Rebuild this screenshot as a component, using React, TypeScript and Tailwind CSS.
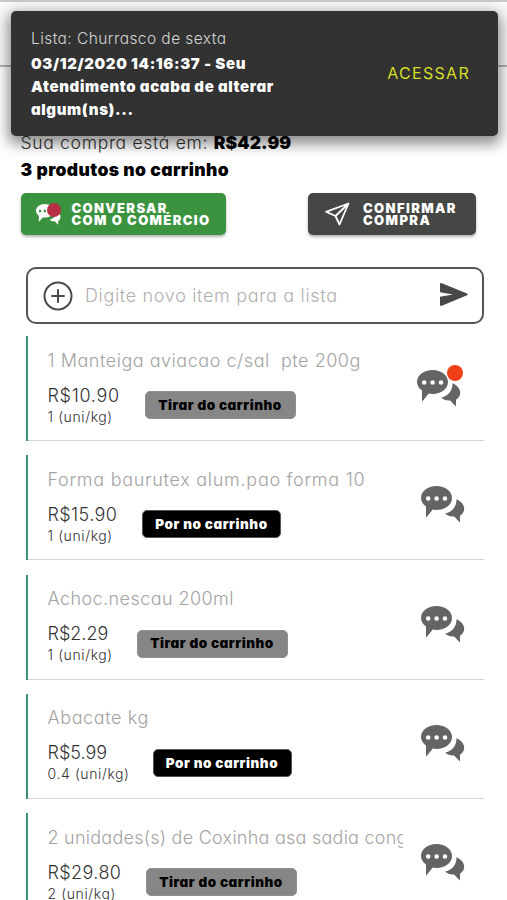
import React from "react";
import clsx from "clsx";

type Product = {
  name: string;
  nameClass: string;
  price: string;
  priceClass: string;
  boxClass: string;
  amount: string;
  inCart: boolean;
  unread?: boolean;
};

const products: Product[] = [
  {
    name: "1 Manteiga aviacao c/sal  pte 200g",
    nameClass: "tracking-[0.53px]",
    price: "R$10.90",
    priceClass: "tracking-[0.7px]",
    boxClass: "w-[97px]",
    amount: "1 (uni/kg)",
    inCart: true,
    unread: true,
  },
  {
    name: "Forma baurutex alum.pao forma 10",
    nameClass: "tracking-[0.72px]",
    price: "R$15.90",
    priceClass: "tracking-[0.4px]",
    boxClass: "w-[94.5px]",
    amount: "1 (uni/kg)",
    inCart: false,
  },
  {
    name: "Achoc.nescau 200ml",
    nameClass: "tracking-[0.43px]",
    price: "R$2.29",
    priceClass: "tracking-normal",
    boxClass: "w-[89px]",
    amount: "1 (uni/kg)",
    inCart: true,
  },
  {
    name: "Abacate kg",
    nameClass: "tracking-[0.6px]",
    price: "R$5.99",
    priceClass: "tracking-normal",
    boxClass: "w-[105px]",
    amount: "0.4 (uni/kg)",
    inCart: false,
  },
  {
    name: "2 unidades(s) de Coxinha asa sadia congelada",
    nameClass: "tracking-[0.25px]",
    price: "R$29.80",
    priceClass: "tracking-[0.4px]",
    boxClass: "w-[98px]",
    amount: "2 (uni/kg)",
    inCart: true,
  },
];

function ChatIcon({ className }: { className?: string }) {
  return (
    <svg viewBox="0 0 44 37" className={className} fill="currentColor">
      <path
        fillRule="evenodd"
        d="M15.500 0C24.200 0 31 5.200 31 12s-6.800 12-15.500 12c-1.500 0-2.600-.1-3.800-.4C9.300 26.500 7.300 29 5 31.700V20.500C2 18.500 0 15.600 0 12 0 5.200 6.800 0 15.500 0ZM7.200 10.200a2.300 2.300 0 1 0 0 4.600 2.300 2.300 0 0 0 0-4.600Zm8.400 0a2.300 2.300 0 1 0 0 4.600 2.300 2.300 0 0 0 0-4.600Zm8.400 0a2.300 2.300 0 1 0 0 4.600 2.300 2.300 0 0 0 0-4.600Z"
      />
      <path d="M35.500 13.200c4.500 2 7.700 5.300 7.700 9.500 0 2.900-1.500 5.300-4.200 7v6.800c-2.200-2.200-4-4.300-5.800-6.100-3.600.4-6.600-.5-9.200-2.800C31 26 35.600 21 35.500 13.200Z" />
    </svg>
  );
}

function Snackbar() {
  return (
    <div className="absolute left-[11px] top-[10.5px] z-10 flex h-[125.5px] w-[487px] items-center justify-between rounded-[5px] bg-[#323232] pl-5 pr-[28px] shadow-[0_5px_14px_3px_rgba(0,0,0,0.45)]">
      <div className="leading-[23px] text-white">
        <p className="pt-px text-[15.5px] font-light tracking-[0.43px] text-[#d4d4d4]">
          Lista: Churrasco de sexta
        </p>
        <p className="w-[270px] pt-[2px] text-[15px] font-black tracking-[0.62px]">
          03/12/2020 14:16:37 - Seu
          <br />
          Atendimento acaba de alterar
          <br />
          algum(ns)...
        </p>
      </div>
      <button className="text-[16px] font-normal tracking-[1.3px] text-[#d5df26]">
        ACESSAR
      </button>
    </div>
  );
}

function ProductRow({ product }: { product: Product }) {
  return (
    <li className="flex h-[105px] border-b-[1.5px] border-[#d4d4d4]">
      <div className="-mb-px w-[2.5px] shrink-0 bg-[#3f9170]" />
      <div className="w-[375px] overflow-hidden pl-[19.5px] pt-[12.5px]">
        <p
          className={clsx(
            "w-[355px] overflow-hidden whitespace-pre text-[18px] font-light leading-6 text-[#a3a3a3]",
            product.nameClass
          )}
        >
          {product.name}
        </p>
        <div className="flex pt-[11px]">
          <div className={clsx("shrink-0 text-[#333]", product.boxClass)}>
            <p
              className={clsx(
                "text-[18px] font-light leading-6",
                product.priceClass
              )}
            >
              {product.price}
            </p>
            <p className="text-[14px] font-light leading-[18px] tracking-[0.6px]">
              {product.amount}
            </p>
          </div>
          <button
            className={clsx(
              "mt-[7.5px] h-[28px] rounded-[5px] border text-[13.5px] font-black tracking-[0.55px]",
              product.inCart
                ? "w-[151px] border-[#8f8f8f] bg-[#868686] text-black"
                : "w-[139px] border-[#555] bg-black text-white"
            )}
          >
            {product.inCart ? "Tirar do carrinho" : "Por no carrinho"}
          </button>
        </div>
      </div>
      <div
        className={clsx(
          "relative h-[37px] w-[44px]",
          product.unread ? "ml-[14px] mt-[34px]" : "ml-[17.5px] mt-[31px]"
        )}
      >
        <ChatIcon className="h-[37px] w-[44px] text-[#646464]" />
        {product.unread && (
          <span className="absolute -top-[5px] left-[30px] size-[16px] rounded-full bg-[#ef4019]" />
        )}
      </div>
    </li>
  );
}

export default function App() {
  return (
    <div className="relative h-[900px] w-[507px] overflow-hidden bg-white font-['Inter','Open_Sans',sans-serif] [font-feature-settings:'cv11','ss03']">
      <Snackbar />
      <header className="h-[67px] border-b-2 border-t-2 border-b-[#b5b5b5] border-t-[#c9c9c9] bg-[#fafafa]" />

      <section className="px-[20.5px] pt-[62px] text-[17.5px] leading-[27px]">
        <p className="font-light tracking-[0.7px] text-[#333]">
          Sua compra está em:{" "}
          <span className="font-black tracking-[0.1px] text-black">
            R$42.99
          </span>
        </p>
        <p className="font-black tracking-[0.38px] text-black">
          3 produtos no carrinho
        </p>
      </section>

      <div className="flex justify-between pl-[20.5px] pr-[31px] pt-[10px]">
        <button className="flex h-[42px] w-[205px] items-center rounded-[5px] bg-[#3c933f] pl-[15px] text-left text-[13px] font-black leading-[12.5px] tracking-[1.35px] text-white shadow-[0_2px_3px_rgba(0,0,0,0.3)]">
          <span className="relative mr-[11px] block">
            <ChatIcon className="h-[21px] w-[25px]" />
            <span className="absolute -top-px left-[11px] size-[14px] rounded-full bg-[#b82f45]" />
          </span>
          <span className="whitespace-nowrap">
            CONVERSAR
            <br />
            COM O COMÉRCIO
          </span>
        </button>
        <button className="flex h-[42px] w-[168px] items-center rounded-[5px] bg-[#454745] pl-[17px] text-left text-[13px] font-black leading-[12.5px] tracking-[1.4px] text-white shadow-[0_2px_3px_rgba(0,0,0,0.3)]">
          <svg
            viewBox="0 0 25 24"
            className="mr-[13px] h-6 w-[25px]"
            fill="none"
            stroke="currentColor"
            strokeWidth="1.8"
            strokeLinejoin="round"
          >
            <path d="M23.500 1.500 1 9.800l9.500 4.200 4 8.500 9-21ZM23.500 1.500 10.500 14" />
          </svg>
          <span>
            CONFIRMAR
            <br />
            COMPRA
          </span>
        </button>
      </div>

      <div className="ml-[26px] mt-[32px] flex h-[57px] w-[458px] items-center rounded-[10px] border-2 border-[#555] pl-[15px] pr-[14px]">
        <svg
          viewBox="0 0 30 30"
          className="size-[30px]"
          fill="none"
          stroke="#4a4a4a"
          strokeWidth="2"
          strokeLinecap="round"
        >
          <circle cx="15" cy="15" r="13.5" />
          <path d="M15 9v12M9 15h12" />
        </svg>
        <input
          className="ml-3 w-[330px] text-[18px] font-light tracking-[0.67px] outline-none placeholder:text-[#b0b0b0]"
          placeholder="Digite novo item para a lista"
        />
        <svg
          viewBox="0 0 28 23"
          className="mb-[2px] ml-auto h-[23px] w-[28px]"
          fill="#484848"
        >
          <path d="M1.300.1 27 10.500q1.500.9 0 1.800L1.300 22.900Q0 23.100 0 21.800V13.800L13 11.400 0 9.200V1Q0 0 1.300.1Z" />
        </svg>
      </div>

      <ul className="ml-[25.5px] mt-3 flex w-[458px] flex-col gap-[14.3px]">
        {products.map((product) => (
          <ProductRow key={product.name} product={product} />
        ))}
      </ul>
    </div>
  );
}
